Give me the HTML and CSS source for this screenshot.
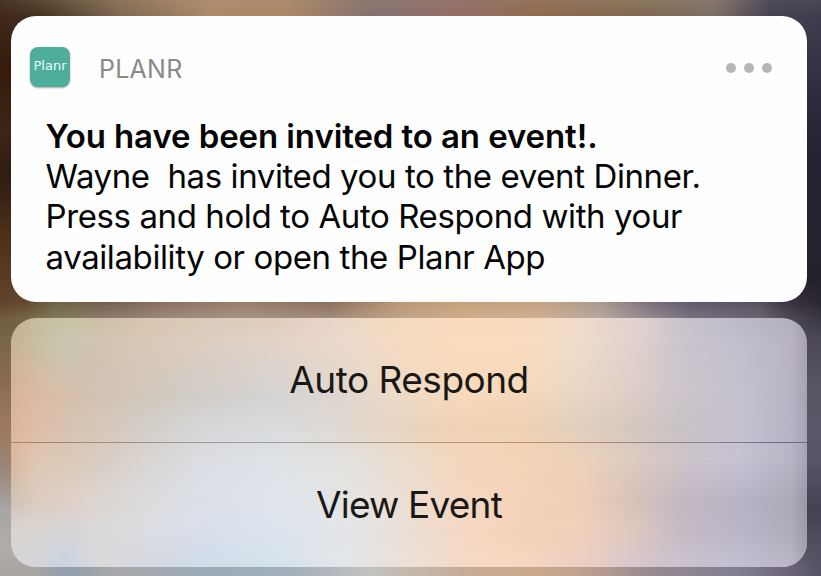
FILE: index.html
```html
<!DOCTYPE html>
<html lang="en">
<head>
<meta charset="utf-8">
<title>Planr notification</title>
<link rel="stylesheet" href="styles.css">
</head>
<body>
<main class="screen">
  <div class="mesh wallpaper" id="wallpaper"></div>
  <div class="content">
    <section class="card">
      <header class="card-header">
        <span class="app-icon">Planr</span>
        <span class="app-name">PLANR</span>
        <svg class="more" width="46" height="10" viewBox="0 0 46 10" fill="#b5b5b6"><circle cx="5" cy="5" r="5"/><circle cx="23" cy="5" r="5"/><circle cx="41" cy="5" r="5"/></svg>
      </header>
      <div class="message">
        <p class="title">You have been invited to an event!.</p>
        <p>Wayne&nbsp; has invited you to the event Dinner.</p>
        <p>Press and hold to Auto Respond with your</p>
        <p class="last">availability or open the Planr App</p>
      </div>
    </section>
    <section class="actions">
      <div class="mesh" id="glass"></div>
      <div class="buttons">
        <button class="action respond">Auto Respond</button>
        <div class="divider"></div>
        <button class="action view">View Event</button>
      </div>
    </section>
  </div>
</main>
<script src="mesh.js"></script>
</body>
</html>
```

FILE: mesh.js
```js
// Draws a smooth mesh: each row is a horizontal gradient that fades in below the previous row.
function mesh(id, rows) {
  const host = document.getElementById(id);
  rows.forEach(([y, stops], i) => {
    const layer = document.createElement("div");
    layer.style.background = `linear-gradient(90deg, ${stops.map(([x, c]) => `#${c} ${x}px`).join(", ")})`;
    if (i > 0) {
      layer.style.maskImage = `linear-gradient(180deg, transparent ${rows[i - 1][0]}px, #000 ${y}px)`;
    }
    host.appendChild(layer);
  });
}

const columns = [0, 24, 54, 89, 139, 189, 263, 329, 389, 449, 509, 569, 629, 669, 729, 779, 796];
const glass = [
  [2, "c2ae90 c6bb9d c8c3a6 cfc0a9 d9c6b2 dccab9 e0cdbf ead8c8 f3dac0 f9dbbc f8dabd f0dacb e0d2d0 c9c4cc bdb9c8 b5b0bf a69faa"],
  [27, "cdb295 c8bea3 c8c7b1 d2c4b1 dac9b7 dccdc0 e2d3ca ebd9cb f5dac1 fadcbb f9dcbf eedccb dfd0cd cbc6cc c2becd b9b4c4 a9a3b0"],
  [77, "d9b397 dcb9a2 d7bfab d2c3b3 d1c8bd d0ccc8 d5d3d2 dfd7cf eedac7 f7d9bb f6d8bb e9d6c5 dccbc7 ccc6cb c5c1cf b9b4c5 a8a2b2"],
  [107, "dcb69a dfbca6 d9c2b0 d5c7ba d3cec8 d6d6d8 d9dbdd dfd9d2 ead5c1 f0d3b5 efd2b3 e0cfbd d3c7c1 c8c3c7 c7c2d0 b9b4c5 a8a2b2"],
  [142, "d9b89f dfc7b3 dcc9b7 d8ccc2 d9d6d5 dbdde1 dfe2e6 e3e2df e9dccf f3d7bc f5d5b7 ecd2ba dbcac1 cec5ca c6c2d2 bab5c6 a9a3b3"],
  [182, "cfc2b5 dccbbe dfcfc5 dcd6d1 dcdcdd dbdfe8 dfe4ec e3e4e5 ebdfd3 f3d7c0 f5d4ba efcfb7 d5c0ba c3b8c1 b8b3c5 aea9b9 9d97a6"],
  [212, "d9d4d2 dad5d3 d6d4d6 dbdadb dbdde1 d8dfea dbe4ee e2e5e8 eadfd6 f4d8c4 f5d3b9 f2d0bc dcc6c0 c5bac4 b9b5c7 b0acbb 9f9aa8"],
  [245, "d6d4d3 d5d6db c9d3e1 dadada d6d9e2 cfdce9 d5e2ec e2e5e8 eae1db f4d9c6 f7d6c0 eccfc2 d6c6cd c9c2ce c2becf bab6c6 a8a3af"]
];
mesh("glass", glass.map(([y, row]) => [y, row.split(" ").map((c, i) => [columns[i], c])]));

const edge = (left, right) => [[0, left], [30, left], [791, right], [821, right]];
mesh("wallpaper", [
  [0, [[0, "4a3526"], [40, "5a4936"], [120, "8d745c"], [210, "b08f70"], [290, "ab8a6c"], [370, "8b7872"], [450, "94736d"], [540, "93745b"], [640, "8b7860"], [715, "85766f"], [770, "504c5b"], [821, "4a4757"]]],
  [16, [[0, "41271a"], [40, "45331f"], [120, "7f6852"], [210, "ac8967"], [290, "ab8664"], [370, "847071"], [450, "956c66"], [540, "916a4d"], [640, "80664e"], [715, "7d6e66"], [770, "47424f"], [821, "403d4e"]]],
  [70, edge("361b0d", "353144")],
  [130, edge("3f2515", "292536")],
  [175, edge("2e1d12", "252132")],
  [230, edge("4a2f1a", "262231")],
  [280, edge("5a3d23", "25212c")],
  [302, [[0, "5f432c"], [25, "64492f"], [55, "6f6448"], [110, "74604f"], [170, "8a7260"], [240, "987f6a"], [330, "8e6e5c"], [400, "bd9875"], [460, "c6a17b"], [540, "c4a382"], [600, "a89b90"], [650, "7b707a"], [690, "615c6c"], [760, "56515f"], [790, "39333f"], [821, "2b2732"]]],
  [318, [[0, "6f5b42"], [25, "776447"], [55, "7f7759"], [110, "8f7d6c"], [170, "9d8a7a"], [240, "a59383"], [330, "a38c7e"], [400, "c0a287"], [460, "cead8c"], [540, "cfaf93"], [600, "b5a8a0"], [650, "938891"], [690, "777180"], [760, "69636f"], [790, "4c4754"], [821, "3a3642"]]],
  [338, edge("77664b", "4c4756")],
  [380, edge("896b54", "575463")],
  [430, edge("9c7b63", "5b5769")],
  [465, edge("9a8473", "575365")],
  [510, edge("a9a6a4", "454153")],
  [550, edge("afacaa", "555162")],
  [567, [[0, "aaa5a1"], [30, "a9a7a4"], [68, "929eac"], [120, "a9a9aa"], [220, "9bacbb"], [290, "a3afbb"], [370, "c1c1bd"], [460, "c6ad98"], [520, "cba98b"], [580, "c2a18f"], [650, "968a91"], [740, "827e91"], [780, "71697c"], [821, "555263"]]]
]);
```

FILE: styles.css
```css
* { box-sizing: border-box; }
body { margin: 0; font-family: Inter, "Liberation Sans", sans-serif; }
p { margin: 0; }
.screen {
  width: 821px;
  height: 576px;
  display: grid;
  overflow: hidden;
  background: #8b7b70;
}
.mesh { grid-area: 1 / 1; display: grid; }
.mesh > div { grid-area: 1 / 1; }
.content {
  grid-area: 1 / 1;
  padding: 16px 14px 9px 11px;
  display: flex;
  flex-direction: column;
  gap: 16px;
  z-index: 1;
}
.card {
  flex: 0 0 286px;
  border-radius: 25px;
  padding: 31px 35px 0 19px;
  background: #fefefe;
}
.card-header { display: flex; align-items: center; height: 40px; }
.app-icon {
  width: 40px;
  height: 40px;
  border-radius: 8px;
  background: #4fad9b;
  color: #e4fffa;
  font: 13px/38px "DejaVu Sans", sans-serif;
  text-align: center;
  box-shadow: 0 1px 2px rgba(0, 0, 0, .35);
}
.app-name { margin: 4px 0 0 29px; font-size: 25px; line-height: 30px; letter-spacing: .25px; color: #8a8a8b; }
.more { margin: 2px 0 0 auto; }
.message {
  padding: 29px 0 0 15.5px;
  font-size: 33px;
  line-height: 40px;
  letter-spacing: -.4px;
  color: #050505;
  white-space: nowrap;
}
.title { font-weight: 600; letter-spacing: -.1px; }
.last { margin-top: 1px; }
.actions {
  flex: 0 0 249px;
  display: grid;
  border-radius: 25px;
  overflow: hidden;
}
.buttons { grid-area: 1 / 1; z-index: 1; }
.action {
  display: block;
  width: 100%;
  height: 124px;
  padding: 0;
  border: 0;
  background: none;
  color: #191816;
  font: 37px/46px Inter, sans-serif;
}
.respond { letter-spacing: -.5px; }
.view { letter-spacing: -.8px; }
.divider {
  height: 1px;
  background: linear-gradient(90deg, #b37e5b, #a29182 15%, #999da5 32%, #bd936f 52%, #c29068 65%, #9c8484 78%, #7b7799 92%, #696486);
}
```
